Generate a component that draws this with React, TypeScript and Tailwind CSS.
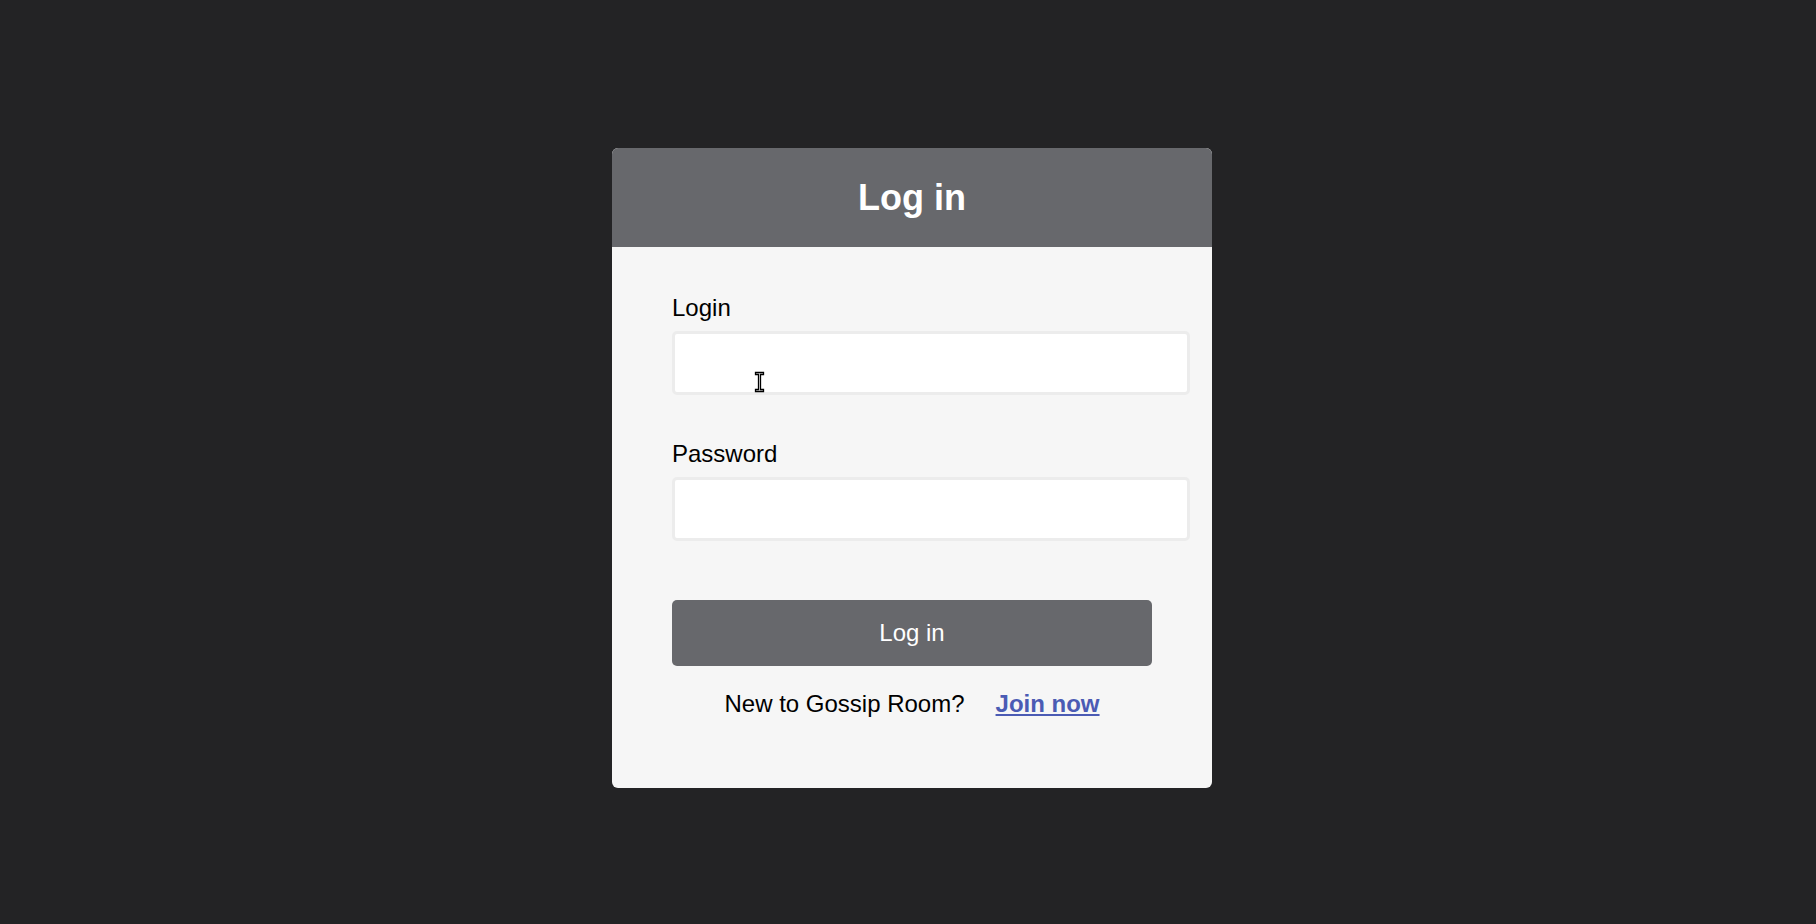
import React from "react";

const font = { fontFamily: '"Liberation Sans", Arial, sans-serif' };

function Field({ label, type, cursor }: { label: string; type: string; cursor?: boolean }) {
  return (
    <div className="flex flex-col">
      <label className="text-[24px] leading-[28px] text-black mb-[9px]">{label}</label>
      <div className="relative w-[518px]">
        <input
          type={type}
          className="block w-[518px] h-[64px] bg-white border-[3px] border-[#ececec] rounded-[5px] px-4 outline-none text-[24px]"
        />
        {cursor && (
          // mouse pointer caught in the screenshot
          <svg
            className="absolute left-[82px] top-[40px] pointer-events-none"
            width="11"
            height="22"
            viewBox="0 0 11 22"
          >
            <path
              d="M1.5 1.5H9.5V3.5H6.5V18.5H9.5V20.5H1.5V18.5H4.5V3.5H1.5Z"
              fill="#fff"
              stroke="#000"
              strokeWidth="1.3"
            />
          </svg>
        )}
      </div>
    </div>
  );
}

export default function App() {
  return (
    <div className="min-h-screen w-full bg-[#232325] flex justify-center pt-[148px] pl-[8px]" style={font}>
      <div className="w-[600px] h-[640px] bg-[#f6f6f6] rounded-md overflow-hidden flex flex-col">
        {/* Header */}
        <div className="h-[99px] bg-[#67686c] flex items-center justify-center">
          <h1 className="text-[36px] font-bold text-white">Log in</h1>
        </div>

        {/* Form */}
        <div className="pt-[47px] px-[60px] flex flex-col">
          <Field label="Login" type="text" cursor />
          <div className="h-[45px]" />
          <Field label="Password" type="password" />

          <button className="mt-[59px] w-[480px] h-[66px] bg-[#67686c] rounded-[5px] text-white text-[24px] leading-[28px]">
            Log in
          </button>

          <div className="mt-[24px] flex justify-center items-center gap-[31px] text-[24px] leading-[28px]">
            <span className="text-black">New to Gossip Room?</span>
            <a href="#" className="font-bold text-[#4b5bb4] underline">
              Join now
            </a>
          </div>
        </div>
      </div>
    </div>
  );
}
